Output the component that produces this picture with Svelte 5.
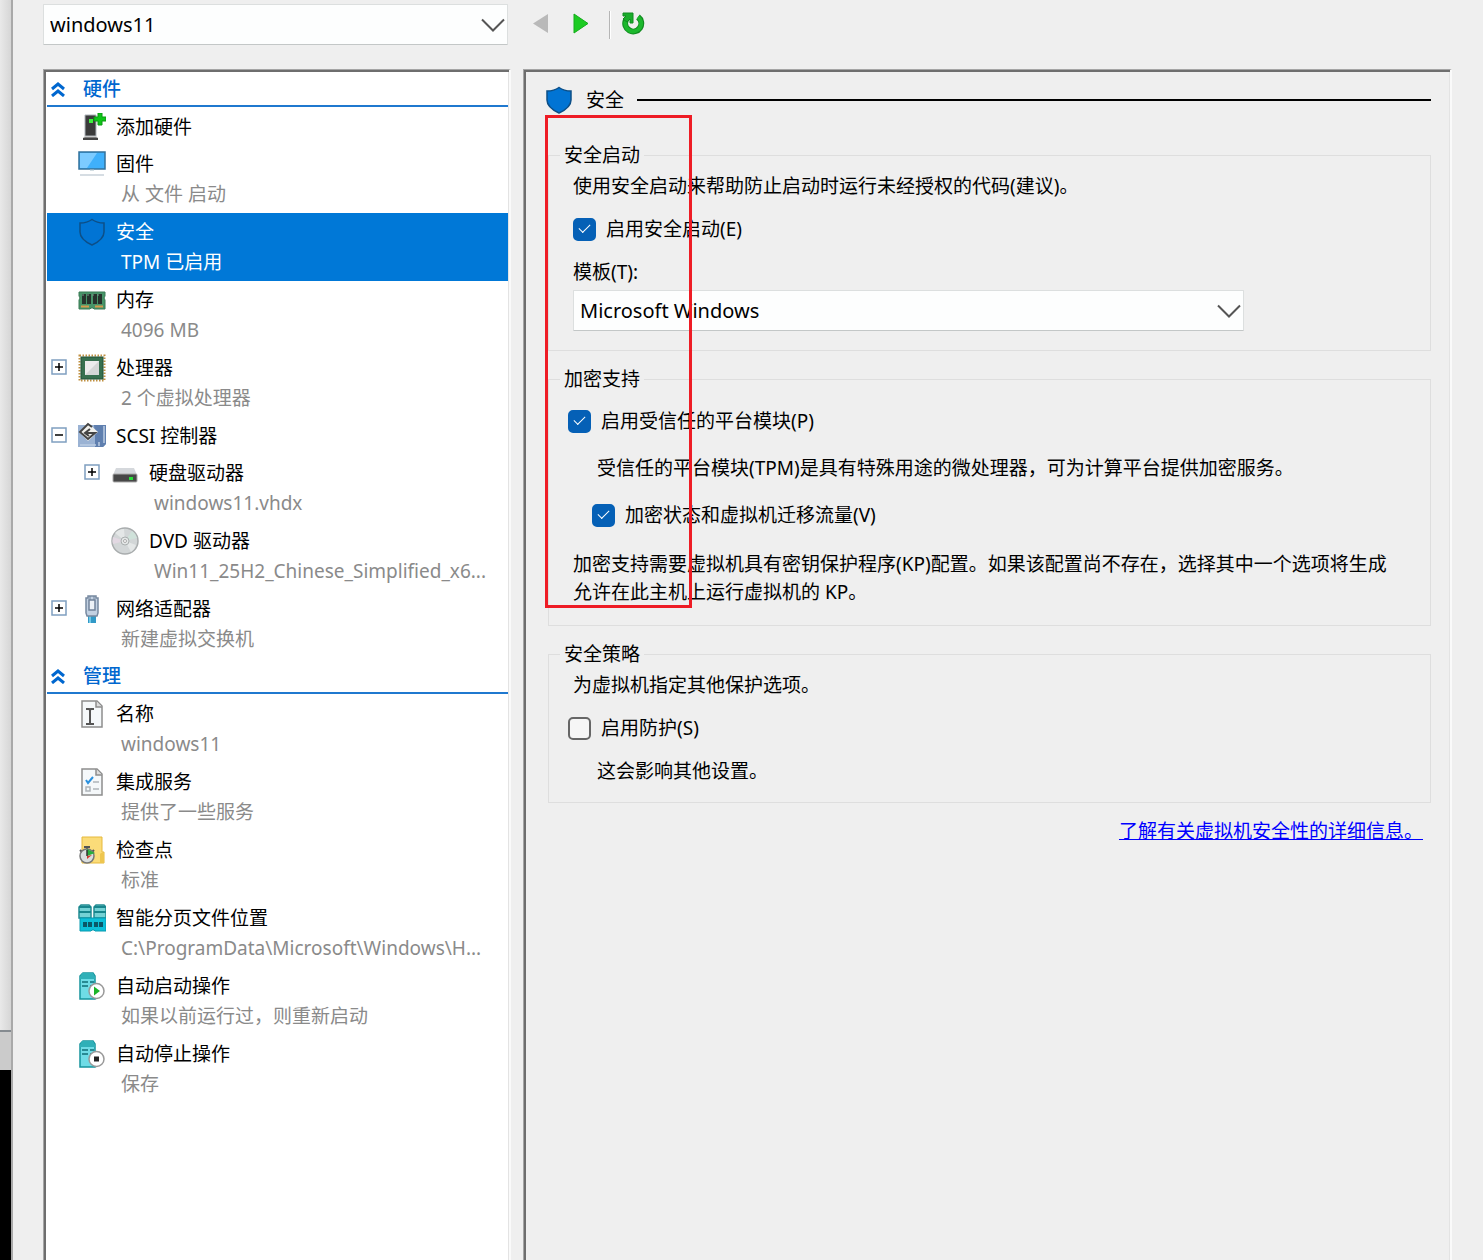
<script lang="ts">
  type Item = {
    id: string;
    title: string;
    sub?: string;
    expander?: 'plus' | 'minus';
    child?: boolean;
  };

  const sections: { title: string; items: Item[] }[] = [
    {
      title: '硬件',
      items: [
        { id: 'add', title: '添加硬件' },
        { id: 'firmware', title: '固件', sub: '从 文件 启动' },
        { id: 'security', title: '安全', sub: 'TPM 已启用' },
        { id: 'memory', title: '内存', sub: '4096 MB' },
        { id: 'cpu', title: '处理器', sub: '2 个虚拟处理器', expander: 'plus' },
        { id: 'scsi', title: 'SCSI 控制器', expander: 'minus' },
        { id: 'hdd', title: '硬盘驱动器', sub: 'windows11.vhdx', expander: 'plus', child: true },
        { id: 'dvd', title: 'DVD 驱动器', sub: 'Win11_25H2_Chinese_Simplified_x6...', child: true },
        { id: 'network', title: '网络适配器', sub: '新建虚拟交换机', expander: 'plus' }
      ]
    },
    {
      title: '管理',
      items: [
        { id: 'name', title: '名称', sub: 'windows11' },
        { id: 'services', title: '集成服务', sub: '提供了一些服务' },
        { id: 'checkpoint', title: '检查点', sub: '标准' },
        { id: 'paging', title: '智能分页文件位置', sub: 'C:\\ProgramData\\Microsoft\\Windows\\H...' },
        { id: 'start', title: '自动启动操作', sub: '如果以前运行过，则重新启动' },
        { id: 'stop', title: '自动停止操作', sub: '保存' }
      ]
    }
  ];

  let selected = $state('security');
  let secureBoot = $state(true);
  let tpm = $state(true);
  let encrypt = $state(true);
  let shielding = $state(false);
</script>

{#snippet shield()}
  <path d="M14 1.500C10.500 4 6 5 2 5v9c0 6 5.500 10 12 13 6.500-3 12-7 12-13V5C22 5 17.500 4 14 1.500z" fill="#0174d4" stroke="#0d4f87" stroke-width="1.500" />
{/snippet}

{#snippet chevron()}
  <svg class="chevron" viewBox="0 0 24 14" aria-hidden="true">
    <path d="M1 1.500l11 11 11-11" fill="none" stroke="#555" stroke-width="2" />
  </svg>
{/snippet}

{#snippet server()}
  <path d="M1 4l3-3h10l2 3v23H1z" fill="#6fdce6" stroke="#16949d" stroke-width="1.500" />
  <path d="M1 5l2-4h11l2 4v2H1z" fill="#2fb0b8" />
  <path d="M3 10h6M11 10h4M3 14h6M11 14h2" stroke="#126f78" stroke-width="1.500" />
  <circle cx="17.500" cy="19" r="7.500" fill="#fff" stroke="#999" stroke-width="1.500" />
{/snippet}

{#snippet icon(id: string)}
  <svg class="icon" viewBox="0 0 28 28" aria-hidden="true">
    {#if id === 'add'}
      <path d="M7 2h11v21H7z" fill="#3b3b3b" stroke="#aeb4ba" />
      <path d="M5 27v-2l2-1h11l2 1v2z" fill="#444" />
      <path d="M6 24h13" stroke="#bbb" />
      <rect x="11" y="6" width="4" height="4" fill="#3fef3f" />
      <path d="M20 0h4v4h4v4h-4v4h-4V8h-4V4h4z" fill="#0fc518" stroke="#0a9a12" />
    {:else if id === 'firmware'}
      <path d="M1 2h26v17H1z" fill="#3fb0fb" stroke="#33729c" stroke-width="1.500" />
      <path d="M2 3h17L9 18H2z" fill="#7ccbff" />
      <path d="M12 20h4" stroke="#a8bdc8" />
      <path d="M2 25h24" stroke="#c9d2da" stroke-width="1.500" />
    {:else if id === 'security'}
      {@render shield()}
    {:else if id === 'memory'}
      <path d="M1 6h26v4l-1 2 1 2v9H16l-1-1h-2l-1 1H1v-9l1-2-1-2z" fill="#479468" stroke="#3a7a55" />
      <path d="M4 8h4v10H4zM9 8h4v10H9zM15 8h4v10h-4zM20 8h4v10h-4z" fill="#26332c" />
      <path d="M4 9h20" stroke="#7b9788" stroke-dasharray="2 3" />
      <path d="M3 20.500h8M17 20.500h8" stroke="#d69b4e" stroke-width="2" />
    {:else if id === 'cpu'}
      <rect x="1.500" y="1.500" width="25" height="25" fill="none" stroke="#c09040" stroke-width="2" stroke-dasharray="1.500 1.500" />
      <rect x="3" y="3" width="22" height="22" fill="#37704f" stroke="#235239" />
      <rect x="7" y="7" width="14" height="14" fill="#d5d7d6" />
      <path d="M7 7h14L7 21z" fill="#ececec" />
    {:else if id === 'scsi'}
      <path d="M0 3h28v19l-3 3H0z" fill="#9ab2d3" />
      <path d="M16 3h12v19l-3 3h-8V14z" fill="#5f7faf" />
      <path d="M26 4v17M2 23h16M21 20v4" stroke="#bccde4" stroke-width="1.500" />
      <path d="M10 1l10 9-10 9L1 10z" fill="#f1f1ed" />
      <path d="M14 5l-4-3-8 8 8 7 7-6H7M12 7l-5 4 4 3" fill="none" stroke="#444" stroke-width="2" />
    {:else if id === 'hdd'}
      <path d="M5 9h18l3 7H2z" fill="#d5d8dc" />
      <rect x="2" y="15" width="24" height="8" rx="1" fill="#474747" stroke="#aaa" />
      <rect x="18" y="18" width="4" height="3" fill="#28df39" />
    {:else if id === 'dvd'}
      <circle cx="14" cy="14" r="13" fill="#d2d6d7" stroke="#a9adae" stroke-width="1.500" />
      <path d="M14 14L4 6a13 13 0 0 1 9-4zM14 14l6 11a13 13 0 0 0 5-7z" fill="#e4e7e7" />
      <path d="M14 14L21 4a12 12 0 0 1 5 7z" fill="#cfe2da" />
      <path d="M14 14L2 17a12 12 0 0 1 0-7z" fill="#e2d8e2" />
      <circle cx="14" cy="14" r="4" fill="#e4e7e7" stroke="#aaafaf" />
      <circle cx="14" cy="14" r="1.500" fill="#fff" stroke="#aaa" />
    {:else if id === 'network'}
      <path d="M10 20h8v8h-8z" fill="#3199c7" />
      <path d="M12 20v8" stroke="#73c8e7" stroke-width="2" />
      <path d="M8 3h2V1h8v2h2v15l-1 3H9l-1-3z" fill="#c3d1e2" stroke="#7789a0" stroke-width="1.500" />
      <path d="M11 5h6v10h-6z" fill="#edf2f7" stroke="#71839a" stroke-width="1.500" />
      <path d="M12 1v4M16 1v4" stroke="#71839a" />
    {:else if id === 'name' || id === 'services'}
      <path d="M4 1h15l5 5v21H4z" fill="#f5f8fa" stroke="#8d8d8d" stroke-width="1.500" />
      <path d="M18 1v6h6" fill="#ddd" stroke="#8d8d8d" stroke-width="1.500" />
      {#if id === 'name'}
        <path d="M8 9h3l1 1 1-1h3M12 10v14M8 24h3l1-1 1 1h3" fill="none" stroke="#555" stroke-width="2" />
      {:else}
        <path d="M8 12l2 3 5-6" fill="none" stroke="#2b91df" stroke-width="2" />
        <path d="M15 14h6M15 21h6M8 19h4v4H8z" fill="none" stroke="#aeb4b9" stroke-width="1.500" />
      {/if}
    {:else if id === 'checkpoint'}
      <path d="M4 1h20v15h2v11H4z" fill="#fbdc79" stroke="#e6b93c" />
      <path d="M22 27V18q2-3 4 0v9z" fill="#eec64f" />
      <path d="M6 11h6M9 11v3M2 14l2 2M16 14l-2 2" fill="none" stroke="#555" stroke-width="2" />
      <circle cx="9" cy="20" r="7" fill="#dadfdf" stroke="#777" stroke-width="1.500" />
      <path d="M9 13l8 4-8 3z" fill="#28ad3d" />
      <path d="M9 20l5-1-5 4z" fill="#cf3a2e" />
      <path d="M9 14v6" stroke="#333" stroke-width="1.500" />
    {:else if id === 'paging'}
      <path d="M1 14V3l2-2h8l2 2v11zM16 14V3l2-2h8l2 2v11z" fill="#75d2d5" stroke="#238c92" stroke-width="1.500" />
      <path d="M1 3h12M1 8h12M16 3h12M16 8h12" stroke="#18868d" stroke-width="2" />
      <path d="M2 14h26v13H17l-1-1h-2l-1 1H2z" fill="#0cbfd9" stroke="#0799ae" />
      <path d="M5 18h4v5H5zM10 18h4v5h-4zM16 18h4v5h-4zM21 18h4v5h-4z" fill="#0a5668" />
    {:else if id === 'start'}
      <g transform="translate(1 0)">
        {@render server()}
        <path d="M15 14.500l6 4.500-6 4.500z" fill="#1db529" />
      </g>
    {:else if id === 'stop'}
      <g transform="translate(1 0)">
        {@render server()}
        <rect x="15" y="16.500" width="5" height="5" fill="#222" />
      </g>
    {/if}
  </svg>
{/snippet}

<div class="page">
  <div class="backdrop">
    <div class="backdrop-body"></div>
    <div class="backdrop-status"></div>
    <div class="backdrop-dark"></div>
  </div>

  <main class="window">
    <div class="toolbar">
      <div class="combo vm-combo">
        <select aria-label="虚拟机">
          <option>windows11</option>
        </select>
        {@render chevron()}
      </div>
      <button class="tool" aria-label="上一个" disabled>
        <svg viewBox="0 0 24 24"><path d="M19 3v19L4 12.500z" fill="#b9b9b9" /></svg>
      </button>
      <button class="tool" aria-label="下一个">
        <svg viewBox="0 0 24 24"><path d="M5 3v19l14-9.500z" fill="#1ccb22" stroke="#13ad1b" /></svg>
      </button>
      <div class="separator"></div>
      <button class="tool" aria-label="刷新">
        <svg viewBox="0 0 24 24">
          <path d="M5 9a8 8 0 1 0 12-3" fill="none" stroke="#118b20" stroke-width="6" />
          <path d="M5 9a8 8 0 1 0 12-3" fill="none" stroke="#1cb82d" stroke-width="4" />
          <path d="M2 2h10v10H9V8L6 11 2 8l3-3H2z" fill="#19ad2a" stroke="#118b20" />
        </svg>
      </button>
    </div>

    <div class="panes">
      <nav class="pane tree">
        {#each sections as section}
          <section>
            <h2>
              <svg class="collapse" viewBox="0 0 14 16" aria-hidden="true">
                <path d="M1 8l6-5 6 5M1 15l6-5 6 5" fill="none" stroke="#0067cf" stroke-width="3" />
              </svg>
              {section.title}
            </h2>
            <ul>
              {#each section.items as item}
                <li class:child={item.child} class:selected={selected === item.id}>
                  <span class="expander-slot">
                    {#if item.expander}
                      <button class="expander" aria-label="展开或折叠 {item.title}">
                        <svg viewBox="0 0 16 16">
                          <rect x="1" y="1" width="14" height="14" fill="#fff" stroke="#7f9fc0" stroke-width="1.500" />
                          <path d={item.expander === 'plus' ? 'M4 8h8M8 4v8' : 'M4 8h8'} stroke="#000" stroke-width="1.500" />
                        </svg>
                      </button>
                    {/if}
                  </span>
                  <button class="item" onclick={() => (selected = item.id)}>
                    <span class="item-title">
                      {@render icon(item.id)}
                      {item.title}
                    </span>
                    {#if item.sub}
                      <span class="item-sub">{item.sub}</span>
                    {/if}
                  </button>
                </li>
              {/each}
            </ul>
          </section>
        {/each}
      </nav>

      <div class="pane detail">
        <header>
          <svg class="icon" viewBox="0 0 28 28" aria-hidden="true">{@render shield()}</svg>
          <h1>安全</h1>
          <div class="rule"></div>
        </header>

        <fieldset class="boot">
          <legend>安全启动</legend>
          <div class="group">
            <p>使用安全启动来帮助防止启动时运行未经授权的代码(建议)。</p>
            <label class="check inset"><input type="checkbox" bind:checked={secureBoot} />启用安全启动(E)</label>
            <div class="field">
              <label for="template">模板(T):</label>
              <div class="combo">
                <select id="template">
                  <option>Microsoft Windows</option>
                </select>
                {@render chevron()}
              </div>
            </div>
          </div>
        </fieldset>

        <fieldset class="crypto">
          <legend>加密支持</legend>
          <div class="group">
            <label class="check"><input type="checkbox" bind:checked={tpm} />启用受信任的平台模块(P)</label>
            <p class="nested">受信任的平台模块(TPM)是具有特殊用途的微处理器，可为计算平台提供加密服务。</p>
            <label class="check nested-check"><input type="checkbox" bind:checked={encrypt} />加密状态和虚拟机迁移流量(V)</label>
            <p class="long">加密支持需要虚拟机具有密钥保护程序(KP)配置。如果该配置尚不存在，选择其中一个选项将生成允许在此主机上运行虚拟机的 KP。</p>
          </div>
        </fieldset>

        <fieldset class="policy">
          <legend>安全策略</legend>
          <div class="group">
            <p>为虚拟机指定其他保护选项。</p>
            <label class="check"><input type="checkbox" bind:checked={shielding} />启用防护(S)</label>
            <p class="nested">这会影响其他设置。</p>
          </div>
        </fieldset>

        <a class="more" href="#security">了解有关虚拟机安全性的详细信息。</a>

        <div class="highlight"></div>
      </div>
    </div>
  </main>
</div>

<style>
  :global(body) {
    background: #f0f0f0;
  }

  .page {
    display: flex;
    height: 100vh;
    min-height: 1120px;
    overflow: hidden;
    box-sizing: border-box;
    font-family: 'Noto Sans', 'Noto Sans CJK SC', sans-serif;
    font-size: 19px;
    line-height: 24px;
    color: #000;
  }

  button,
  select {
    font: inherit;
    color: inherit;
  }

  button {
    padding: 0;
    border: 0;
    background: none;
    text-align: left;
  }

  /* Window behind the dialog */
  .backdrop {
    display: flex;
    flex-direction: column;
    flex: 0 0 11px;
    border-right: 2px solid #a9a9a9;
  }

  .backdrop-body {
    flex: 1;
    background: linear-gradient(90deg, #e9e9e9, #d6d6d6);
  }

  .backdrop-status {
    height: 38px;
    border-top: 2px solid #858b90;
    background: #cbcbcb;
  }

  .backdrop-dark {
    height: 190px;
    background: #000;
  }

  .window {
    flex: 1;
    min-width: 0;
    display: flex;
    flex-direction: column;
    padding: 4px 31px 0 30px;
    background: #efefef;
  }

  /* Toolbar */
  .toolbar {
    display: flex;
    align-items: center;
    gap: 16px;
    margin-bottom: 24px;
  }

  .combo {
    position: relative;
  }

  .combo select {
    display: block;
    width: 100%;
    height: 41px;
    padding: 0 40px 0 6px;
    border: 1px solid #dcdfdf;
    border-bottom-color: #c3c7c7;
    border-radius: 1px;
    background: #fdfefe;
    font-size: 20px;
    appearance: none;
  }

  .vm-combo {
    flex: 0 0 465px;
  }

  .chevron {
    position: absolute;
    right: 3px;
    top: 14px;
    width: 24px;
    height: 14px;
    pointer-events: none;
  }

  .tool {
    width: 24px;
    height: 24px;
    margin-bottom: 4px;
  }

  .tool svg {
    display: block;
  }

  .vm-combo + .tool {
    margin-left: 5px;
  }

  .separator {
    width: 1px;
    height: 28px;
    border-left: 1px solid #b5b5b5;
    background: #fff;
    margin-right: -6px;
  }

  /* Panes */
  .panes {
    flex: 1;
    display: flex;
    gap: 12px;
  }

  .pane {
    box-sizing: border-box;
    border: solid #a5a5a5;
    border-width: 1px 2px 0 1px;
    border-right-color: #fafafa;
    box-shadow: inset 2px 2px 0 #6e6e6e, inset -1px 0 0 #e3e3e3;
  }

  .tree {
    flex: 0 0 468px;
    padding: 3px 1px 0 3px;
    background: #fff;
  }

  h1,
  h2 {
    margin: 0;
    font-size: 19px;
    font-weight: 400;
  }

  h2 {
    display: flex;
    align-items: center;
    gap: 18px;
    height: 32px;
    padding-left: 4px;
    border-bottom: 2px solid #1f78cf;
    color: #0067cf;
    font-weight: 500;
  }

  .collapse {
    width: 14px;
    height: 16px;
  }

  ul {
    margin: 0;
    padding: 1px 0 2px;
    list-style: none;
  }

  li {
    display: flex;
    padding-left: 4px;
  }

  li.child {
    padding-left: 37px;
  }

  .expander-slot {
    flex: 0 0 16px;
    margin-right: 11px;
    padding-top: 10px;
  }

  .expander,
  .expander svg {
    display: block;
    width: 16px;
    height: 16px;
  }

  .item {
    flex: 1;
    min-width: 0;
    white-space: nowrap;
  }

  .item-title {
    display: flex;
    align-items: center;
    gap: 10px;
    height: 37px;
  }

  .item-sub {
    display: block;
    height: 31px;
    padding-left: 43px;
    color: #8a8a8a;
  }

  .icon {
    flex: none;
    width: 28px;
    height: 28px;
  }

  .selected {
    background: #0078d7;
    color: #fff;
  }

  .selected .item-sub {
    color: #fff;
  }

  /* Detail */
  .detail {
    position: relative;
    flex: 1;
    min-width: 0;
    display: flex;
    flex-direction: column;
    gap: 16px;
    padding: 3px 19px 0 24px;
  }

  header {
    display: flex;
    align-items: center;
    gap: 13px;
    height: 54px;
    margin-left: -3px;
  }

  .rule {
    flex: 1;
    height: 2px;
    background: #000;
  }

  fieldset {
    min-width: 0;
    margin: 0;
    padding: 7px 19px 19px;
    border: 1px solid #dedede;
  }

  legend {
    margin-left: -8px;
    padding: 0 4px;
  }

  .group {
    display: flex;
    flex-direction: column;
    gap: 19px;
  }

  .crypto .group {
    gap: 23px;
    padding-top: 11px;
  }

  p {
    margin: 0;
    padding-left: 5px;
  }

  p.nested {
    padding-left: 29px;
  }

  p.long {
    padding-right: 12px;
    line-height: 28px;
  }

  .check {
    display: flex;
    align-items: center;
    gap: 10px;
  }

  .check.inset {
    padding-left: 5px;
  }

  .check.nested-check {
    padding-left: 24px;
  }

  .check input {
    display: grid;
    place-items: center;
    width: 23px;
    height: 23px;
    margin: 0;
    border: 2px solid #666;
    border-radius: 5px;
    background: #f6f6f6;
    appearance: none;
  }

  .check input:checked {
    border-color: #0560b6;
    background: #0560b6;
  }

  .check input:checked::before {
    content: '';
    width: 10px;
    height: 5px;
    margin-bottom: 4px;
    border: solid #fff;
    border-width: 0 0 1px 1px;
    transform: rotate(-45deg);
  }

  .field {
    display: flex;
    flex-direction: column;
    gap: 6px;
    max-width: 671px;
    padding-left: 5px;
  }

  .more {
    align-self: flex-end;
    margin-right: 8px;
    color: #00f;
    text-decoration: underline;
  }

  .highlight {
    position: absolute;
    left: 21px;
    top: 45px;
    box-sizing: border-box;
    width: 147px;
    height: 493px;
    border: 3px solid #ee1c25;
    pointer-events: none;
  }
</style>
